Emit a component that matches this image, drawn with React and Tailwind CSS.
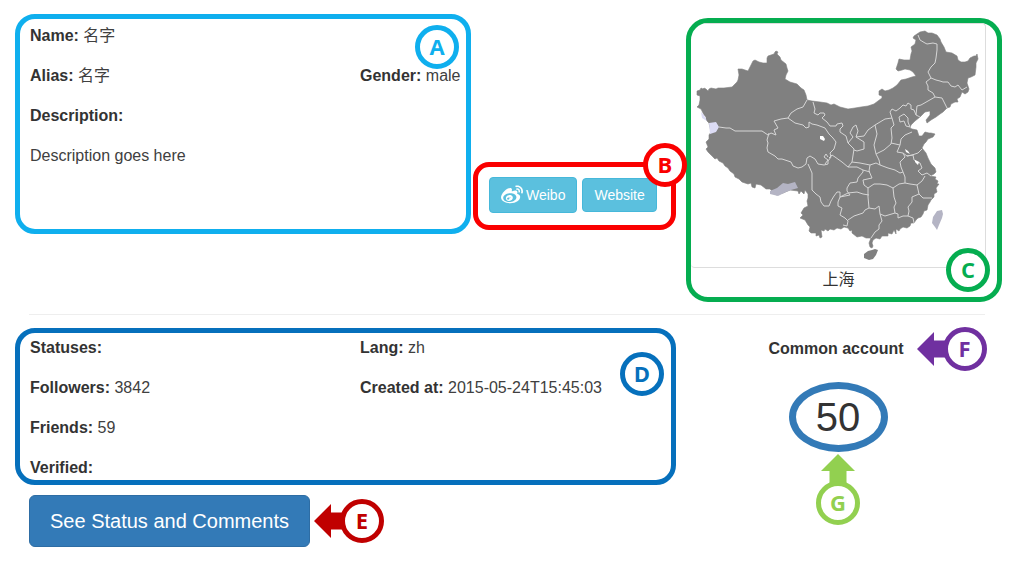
import React from "react";
import { FaWeibo } from "react-icons/fa";

function Badge({ letter, className }) {
  return (
    <span
      className={
        "flex size-11 shrink-0 items-center justify-center rounded-full border-[5px] bg-white pb-[2px] font-['Open_Sans',sans-serif] text-[22px] leading-none font-bold " +
        className
      }
    >
      {letter}
    </span>
  );
}

function Field({ label, children }) {
  return (
    <p>
      <strong className="font-bold">{label}</strong> <span className="text-[#404040]">{children}</span>
    </p>
  );
}

function LeftArrow({ className }) {
  return (
    <svg viewBox="0 0 30 34" aria-hidden="true" className={"-mr-1 h-[34px] w-[30px] shrink-0 " + className}>
      <path d="M0 17 17 0V8.500H30V25.500H17V34Z" fill="currentColor" />
    </svg>
  );
}

function UpArrow({ className }) {
  return (
    <svg viewBox="0 0 34 30" aria-hidden="true" className={"-mb-[3px] h-[30px] w-[34px] shrink-0 " + className}>
      <path d="M17 0 34 17H25.500V30H8.500V17H0Z" fill="currentColor" />
    </svg>
  );
}

const MAINLAND =
  "M697 91 700 90 701 88 703 89 704 88 706 89 708 91 709 89 711 88 716 89 718 88 724 88 732 87 735 84 737 82 738 80 739 75 738 69 742 69 745 70 748 71 749 69 751 65 753 61 755 60 759 62 763 63 767 63 767 58 768 56 771 55 774 54 775 52 776 51 778 52 777 54 780 57 781 60 786 64 787 68 788 71 786 75 785 79 790 82 797 84 801 88 804 90 806 95 807 100 812 101 820 102 827 103 831 105 834 104 840 107 848 109 855 108 861 107 868 106 874 104 878 101 882 98 882 96 879 95 879 91 882 89 885 91 889 90 893 88 897 85 901 80 906 79 912 77 916 76 913 72 910 70 905 69 902 70 898 71 896 69 897 66 898 63 899 59 904 60 910 60 911 54 912 51 911 47 915 44 916 40 913 38 914 36 917 34 920 32 925 31 928 33 932 33 937 35 940 39 941 42 944 47 946 52 952 53 957 56 958 60 961 62 965 62 968 61 970 58 974 56 976 56 977 54 978 59 976 63 976 67 975 75 971 77 968 78 967 83 969 89 968 92 965 94 962 92 960 97 957 99 958 102 955 102 951 104 950 107 947 108 943 112 940 114 936 117 931 120 927 123 926 120 930 115 930 111 925 112 920 117 915 121 911 125 910 128 912 129 917 130 919 136 922 136 925 132 929 133 931 133 935 134 933 137 928 139 926 142 924 144 922 148 926 153 928 158 931 164 935 168 936 172 934 174 930 176 936 177 935 179 938 181 937 184 939 184 936 188 937 192 934 194 934 197 931 200 930 202 928 205 927 210 924 211 923 214 921 217 918 218 916 220 914 223 911 223 910 226 907 228 903 227 900 229 899 231 896 229 896 234 894 230 892 234 888 233 888 236 882 236 880 239 876 238 873 240 872 243 873 246 872 248 870 247 869 243 871 238 866 238 862 236 857 237 852 233 852 230 850 231 848 228 844 227 841 229 837 228 834 230 830 229 828 231 825 229 824 231 821 230 822 237 820 238 819 235 816 236 816 233 811 233 809 231 810 227 808 225 805 220 800 218 803 215 801 213 804 208 808 206 807 201 808 198 808 194 805 190 804 194 801 191 799 194 798 191 790 190 783 193 776 195 770 189 766 189 761 185 756 184 755 188 752 187 751 183 748 184 742 182 739 179 735 177 734 174 730 171 728 168 725 166 723 163 719 161 717 158 715 159 712 156 711 155 708 152 706 149 708 147 706 142 709 139 709 135 711 132 709 123 706 120 706 117 704 115 701 109 697 107 699 105 700 100 700 96 697 95Z";

const PROVINCES = [
  "M719 127 726 128 730 128 735 131 742 131 750 131 762 131 768 135 771 133 776 135 774 130 778 128 774 121 781 119 788 118 791 113 797 109 803 107 807 100",
  "M788 118 795 123 803 125 806 128 809 127 809 122 812 124 817 125 825 128 829 134 833 138 836 142 834 149 830 153 831 157 828 161 828 164 824 165 818 164 815 159 810 156 807 158 806 164 802 167 798 168 793 166 791 162 788 161 782 159 778 159 775 156 768 152 767 148 768 143 767 140 769 133",
  "M813 102 815 109 814 113 818 115 820 113 824 113 825 115 822 118 827 122 830 126 836 126 837 124 842 123 843 126 840 129 840 132 846 136 848 143 854 149 852 162 848 167 842 162 835 157 832 155 829 158",
  "M828 157 826 154 824 157 828 160 825 164",
  "M848 143 853 137 850 133 853 127 856 125 858 131 856 137 864 142 864 149 857 151 854 150 M856 137 864 136 868 130 875 125",
  "M808 164 812 173 812 190 816 194 820 197 821 202 824 206 829 206 831 201 834 196 837 192 840 192 840 197 850 195 847 191 847 188 850 183 857 182 858 178 863 172 863 170 857 167 848 167",
  "M840 197 838 202 838 206 842 208 840 215 845 218 848 221 847 226 843 225 M848 220 854 216 860 214 863 213 865 210 869 208",
  "M863 170 870 172 M840 197 848 193 857 192 863 194 869 195",
  "M875 125 885 119 892 118 894 125 891 128 892 138 891 144 884 150 876 154 874 145 877 134 875 125",
  "M892 118 890 112 892 109 896 111 900 108 903 105 906 106 908 103 911 105 911 109 914 110 916 115 920 117 M900 122 899 117 904 114 908 118 908 122 910 127 906 126 904 121 900 122",
  "M916 115 917 106 921 105 928 101 935 97 942 98 945 104 947 108",
  "M918 35 920 40 925 43 927 44 933 43 937 44 937 50 936 58 935 63 931 67 928 72 931 78 926 82 928 86 928 90 933 93 935 97",
  "M931 78 936 80 940 81 943 82 948 82 951 86 955 87 958 85 962 90 967 87",
  "M891 143 900 145 901 139 905 135 912 132 M900 145 897 152 903 153 907 156 912 155 918 153 922 149",
  "M876 154 879 160 880 165 888 168 895 170 900 173 903 172 901 167 900 162 905 157 903 153",
  "M907 156 913 155 914 160 920 163 922 168 918 171 922 175 927 173 931 176",
  "M903 172 905 177 905 183 910 184 917 185 922 181 925 176 M917 185 919 194 923 198 932 198",
  "M852 162 860 163 870 165 876 163 880 165 M870 165 869 171 872 178 863 180 864 185 868 188 874 184 880 184 887 185 893 188 899 184 905 183",
  "M868 188 868 197 869 208 875 209 879 206 880 214 885 216 895 213 894 207 896 203 894 197 893 188",
  "M895 213 898 214 898 218 903 216 908 216 909 211 908 207 912 202 912 197 919 194 M908 216 913 218 914 223",
  "M880 214 882 221 879 225 879 229 875 232 871 238",
];

function ChinaMap() {
  return (
    <svg viewBox="691 24 294 243" role="img" aria-label="Map of China" className="block w-full">
      <path d={MAINLAND} fill="#808080" stroke="#808080" strokeWidth="0.600" />
      <path d="M872 250 875 249 878 250 876 255 873 259 869 260 864 258 864 254 868 251Z" fill="#808080" />
      <g fill="none" stroke="#d6d6d6" strokeWidth="1" strokeLinejoin="round">
        {PROVINCES.map((d) => (
          <path key={d} d={d} />
        ))}
      </g>
      <path d="M820 136 823 136 825 139 824 141 820 139Z" fill="#fff" />
      <path d="M905 149 908 151 910 154 906 152Z M915 160 919 162 918 165 915 162Z" fill="#fff" />
      <path d="M701 112 704 115 707 121 702 118Z M709 123 716 122 719 127 716 132 710 134Z" fill="#dcdcf5" />
      <path d="M770 191 777 188 783 183 788 184 795 182 798 188 791 190 786 192 778 196 770 194Z" fill="#b4b4c4" />
      <path d="M942 210 943 214 942 218 939 225 937 230 935 227 932 223 933 217 937 211Z" fill="#b4b4c4" />
    </svg>
  );
}

export default function App() {
  return (
    <main className="bg-white pt-[14px] pr-[13px] pb-[15px] pl-[15px] font-['Liberation_Sans','Noto_Sans_CJK_SC',sans-serif] text-base leading-6 text-[#333]">
      <div className="grid grid-cols-[661fr_316fr] items-start gap-[10px]">
        <div className="grid grid-cols-[456fr_203fr] items-start gap-[2px]">
          <section className="relative min-h-[220px] rounded-[20px] border-[5px] border-[#0fafee] pt-[5px] pl-[10px]">
            <div className="flex flex-col gap-4">
              <Field label="Name:">名字</Field>
              <div className="grid grid-cols-[330fr_106fr]">
                <Field label="Alias:">名字</Field>
                <Field label="Gender:">male</Field>
              </div>
              <Field label="Description:" />
              <p className="text-[#404040]">Description goes here</p>
            </div>
            <Badge letter="A" className="absolute top-[6px] right-[7px] border-[#0fafee] text-[#0fafee]" />
          </section>

          <section className="relative z-10 mt-[148px] rounded-[16px] border-[5px] border-[#fa0000] pt-[10px] pb-3 pl-[11px]">
            <div className="flex items-center gap-[5px]">
              <button
                type="button"
                className="flex h-9 items-center gap-[3px] rounded border border-[#46b8da] bg-[#5bc0de] px-[11px] text-sm text-white"
              >
                <FaWeibo className="size-[22px]" aria-hidden="true" />
                Weibo
              </button>
              <button
                type="button"
                className="h-[34px] rounded border border-[#46b8da] bg-[#5bc0de] px-[11px] text-sm text-white"
              >
                Website
              </button>
            </div>
            <Badge letter="B" className="absolute -top-6 -right-4 border-[#fa0000] text-[#fa0000]" />
          </section>
        </div>

        <section className="relative mt-1 overflow-hidden rounded-[22px] border-[5px] border-[#05ad50] pb-[5px]">
          <figure className="mr-[11px]">
            <div className="rounded-[4px] border-t border-r border-b border-[#ddd]">
              <ChinaMap />
            </div>
            <figcaption className="text-center">上海</figcaption>
          </figure>
          <Badge letter="C" className="absolute right-[7px] bottom-[5px] border-[#05ad50] text-[#05ad50]" />
        </section>
      </div>

      <hr className="mt-3 mr-[17px] mb-[13px] ml-[14px] border-[#eee]" />

      <div className="grid grid-cols-[661fr_316fr] items-start gap-[10px]">
        <div>
          <section className="relative rounded-[20px] border-[5px] border-[#0670bc] pt-[3px] pl-[10px]">
            <div className="grid grid-cols-[330fr_311fr]">
              <div className="flex flex-col gap-4">
                <Field label="Statuses:" />
                <Field label="Followers:">3842</Field>
                <Field label="Friends:">59</Field>
                <Field label="Verified:" />
              </div>
              <div className="flex flex-col gap-4">
                <Field label="Lang:">zh</Field>
                <Field label="Created at:">2015-05-24T15:45:03</Field>
              </div>
            </div>
            <Badge letter="D" className="absolute top-[19px] right-[7px] border-[#0670bc] text-[#0670bc]" />
          </section>

          <div className="mt-[10px] ml-[14px] flex items-center gap-1">
            <button
              type="button"
              className="h-[52px] rounded-md border border-[#2e6da4] bg-[#337ab7] px-5 text-xl text-white"
            >
              See Status and Comments
            </button>
            <span className="flex items-center">
              <LeftArrow className="text-[#c00000]" />
              <Badge letter="E" className="relative border-[#c00000] text-[#c00000]" />
            </span>
          </div>
        </div>

        <section className="flex flex-col items-center pt-[9px] pr-[17px] pl-[5px]">
          <h2 className="relative mr-1 font-bold">
            Common account
            <span className="absolute top-1/2 left-full ml-[13px] flex -translate-y-1/2 items-center">
              <LeftArrow className="text-[#7030a0]" />
              <Badge letter="F" className="relative border-[#7030a0] text-[#7030a0]" />
            </span>
          </h2>
          <div className="mt-[21px] flex h-[70px] w-[99px] items-center justify-center rounded-[50%] border-[7px] border-[#337ab7] text-[40px] leading-none">
            50
          </div>
          <div className="mt-[2px] flex flex-col items-center">
            <UpArrow className="text-[#92d050]" />
            <Badge letter="G" className="relative border-[#92d050] text-[#92d050]" />
          </div>
        </section>
      </div>
    </main>
  );
}
